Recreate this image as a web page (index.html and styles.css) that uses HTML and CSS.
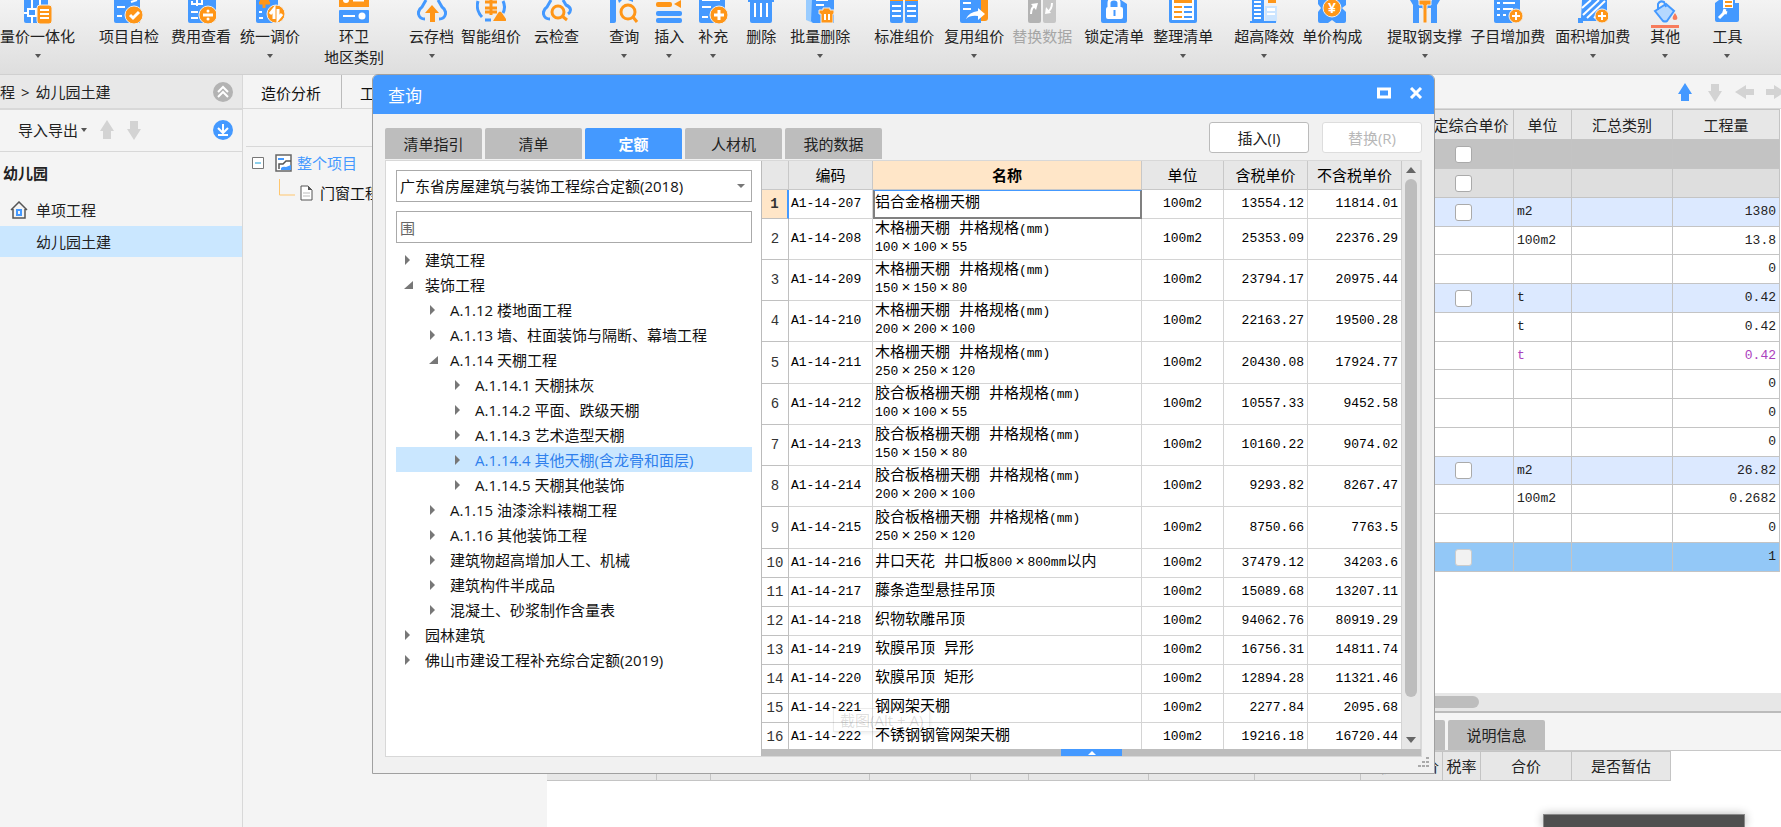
FILE: index.html
```html
<!DOCTYPE html>
<html lang="zh-CN">
<head>
<meta charset="utf-8">
<title>查询</title>
<link rel="stylesheet" href="styles.css">
</head>
<body>
<header class="ribbon">
  <button class="tool"><svg viewBox="0 0 30 24"><path class="b" d="M1 0h24v23H3a2 2 0 0 1-2-2z"/><path class="wl thin" d="M1 13h14M9 0v23M17 0v6"/><path class="w" d="M4 8h10v9H4z"/><path class="b" d="M6 10h6v5H6z"/><rect class="o ws" x="14" y="5" width="15" height="19" rx="3"/><path class="wl thin" d="M17 10h9M17 14h9M17 18h9"/></svg><span>量价一体化</span><i class="caret"></i></button>
  <button class="tool g24"><svg viewBox="0 0 30 24"><path class="b" d="M0 0h26v23H2a2 2 0 0 1-2-2z"/><path class="wl thin" d="M3 7h8M3 16h5M17 2l6-2"/><circle class="o ws" cx="20" cy="15" r="9"/><path class="wl" d="M16 15l3 3 6-6"/></svg><span>项目自检</span></button>
  <button class="tool g12"><svg viewBox="0 0 30 24"><path class="b" d="M2 0h28v17L22 23H4a2 2 0 0 1-2-2z"/><path class="wl thin" d="M5 12h7M5 18h7M6 1v3h10V0M11 0v6"/><circle class="o ws" cx="22" cy="15" r="9"/><path class="wl" d="M17 15h10"/><circle class="w" cx="22" cy="11" r="1.5"/><circle class="w" cx="22" cy="19" r="1.5"/></svg><span>费用查看</span></button>
  <button class="tool g9"><svg viewBox="0 0 30 24"><path class="b" d="M1 0h22v23H3a2 2 0 0 1-2-2z"/><path class="ol" d="M4 3h11M9 0v8M5 0h9"/><path class="wl thin" d="M4 12h3M4 18h4"/><circle class="o ws" cx="21" cy="14" r="9"/><path class="wl" d="M19 19V9l-4 5M23 9v10l4-5"/></svg><span>统一调价</span><i class="caret"></i></button>
  <button class="tool g24"><svg viewBox="0 0 30 24"><path class="o" d="M0 0h30v7H0z"/><circle class="w" cx="7" cy="0" r="3"/><path class="wl" d="M14 0h11"/><rect class="b" y="10" width="30" height="13" rx="1"/><path class="wl thin" d="M4 16h12"/><circle class="w" cx="23" cy="16" r="3.5"/></svg><span>环卫</span><span>地区类别</span></button>
  <button class="tool g25"><svg viewBox="0 0 30 24"><path class="bl" d="M8 19C1 19-1 11 5 7L9 0M22 19c7 0 9-8 3-12L21 0"/><path class="o" d="M15 5l7 8h-4v9h-5v-9H8z"/></svg><span>云存档</span><i class="caret"></i></button>
  <button class="tool g7"><svg viewBox="0 0 30 24"><path class="bl" d="M2 1C0 8 3 14 6 17M9 20h6M27 1q3 6 0 12"/><path class="ol" d="M9 2h12M9 8h12M15 0v15M9 12h12"/><path class="o" d="M17 21l5-8q2-3 4 0l4 6q1 2-1 2z"/></svg><span>智能组价</span></button>
  <button class="tool g13"><svg viewBox="0 0 30 24"><path class="bl" d="M8 19C1 19-1 11 5 7L9 0M26 14c4-3 3-7-2-9L21 0"/><circle class="ol" cx="16" cy="12" r="6"/><path class="ol" d="M20 16l5 4"/></svg><span>云检查</span></button>
  <button class="tool g30"><svg viewBox="0 0 30 24"><path class="b" d="M1 0h6v21q0 2-2 2H1zM9 0h4l-3 3zM19 0h5v2z"/><circle class="ol" cx="19" cy="12" r="7"/><path class="ol" d="M24 17l4 5"/></svg><span>查询</span><i class="caret"></i></button>
  <button class="tool g15"><svg viewBox="0 0 30 24"><rect class="o" x="2" y="2" width="16" height="5" rx="2"/><path class="o" d="M20 4l7-4v8z"/><rect class="b" x="2" y="11" width="26" height="5" rx="2"/><rect class="b" x="2" y="18" width="26" height="5" rx="2"/></svg><span>插入</span><i class="caret"></i></button>
  <button class="tool g14"><svg viewBox="0 0 30 24"><path class="b" d="M1 0h26v10l-8 13H3a2 2 0 0 1-2-2z"/><path class="wl thin" d="M4 0h18M4 7h9M4 17h6"/><circle class="o ws" cx="21" cy="15" r="9"/><path class="wl" d="M16 15h10M21 10v10"/></svg><span>补充</span><i class="caret"></i></button>
  <button class="tool g18"><svg viewBox="0 0 30 24"><path class="b" d="M2 0h26v2h-2v19q0 2-2 2H6q-2 0-2-2V2H2z"/><path class="wl thin" d="M9 3v14M15 3v14M21 3v14"/></svg><span>删除</span></button>
  <button class="tool g14"><svg viewBox="0 0 30 24"><path class="lb" d="M1 0h7v23L1 20z"/><path class="b" d="M7 0h22v23H8l-2-2z"/><path class="wl thin" d="M11 0h12M11 5h8"/><path class="o ws" d="M14 10h4V8h7v2h4v4h-1v9H16v-9h-2z"/><path class="wl thin" d="M20 14v6M24 14v6"/></svg><span>批量删除</span><i class="caret"></i></button>
  <button class="tool g24"><svg viewBox="0 0 30 24"><rect class="b" x="1" y="-2" width="13" height="25" rx="2"/><rect class="b" x="16" y="-2" width="13" height="25" rx="2"/><path class="o" d="M1 0h13v1H1zM16 0h13v1H16z"/><path class="wl thin" d="M3 6h9M3 11h9M3 16h9M18 6h9M18 11h9M18 16h9"/></svg><span>标准组价</span></button>
  <button class="tool g10"><svg viewBox="0 0 30 24"><path class="o" d="M20 0h9v18q0 3-3 3h-6z"/><path class="b" d="M1 0h21v23H3q-2 0-2-2z"/><path class="wl thin" d="M4 3h8M4 9h8"/><path class="w" d="M7 19q3-7 12-8V8l7 6-7 6v-4q-8-1-12 3z"/></svg><span>复用组价</span><i class="caret"></i></button>
  <button class="tool g8" disabled><svg viewBox="0 0 30 24"><rect class="gy" x="1" y="-2" width="13" height="25" rx="2"/><rect class="gy lt" x="16" y="-2" width="13" height="25" rx="2"/><path class="wl thin" d="M4 14q0-7 5-9"/><path class="w" d="M4 4l7-1-2 7z"/><path class="wl thin" d="M25 3q0 7-5 9"/><path class="w" d="M18 14l1-7 5 6z"/></svg><span>替换数据</span></button>
  <button class="tool g12"><svg viewBox="0 0 30 24"><path class="b" d="M2 0h20l6 4v17q0 2-2 2H4q-2 0-2-2z"/><path class="wl" d="M10 8V3q0-4 5-4t5 4v5"/><rect class="w" x="7" y="7" width="17" height="12" rx="2"/><path class="bl thin" d="M15.500 10v6"/></svg><span>锁定清单</span></button>
  <button class="tool g9"><svg viewBox="0 0 30 24"><rect class="b" x="1" y="-3" width="28" height="26" rx="2"/><path class="w" d="M4 0h22v20H4z"/><path class="o" d="M6 0h18v3H6z"/><path class="ol thin" d="M6 7h8M6 12h8M6 17h8"/><path class="bl thin" d="M16 7h8M16 12h8M16 17h8"/></svg><span>整理清单</span><i class="caret"></i></button>
  <button class="tool g21"><svg viewBox="0 0 30 24"><path class="lb lt" d="M16 6h12v16H16z"/><path class="b" d="M3 0h12v21h12v2H1v-2h2z"/><path class="wl thin" d="M5 2h7M5 6h7M5 10h7M5 14h7M5 18h7"/><path class="w" d="M18 8h8v3h-8zM18 13h8v2h-8z"/><path class="o" d="M19 0h8v3h-8z"/></svg><span>超高降效</span><i class="caret"></i></button>
  <button class="tool g8"><svg viewBox="0 0 30 24"><path class="b" d="M1 0h28v5l-4 3 4 4v9q0 2-2 2h-8l-4-3-4 3H3q-2 0-2-2v-9l3-4-3-4z"/><circle class="o ws" cx="15" cy="8" r="9"/><text class="yen" x="15" y="13">¥</text></svg><span>单价构成</span></button>
  <button class="tool g25"><svg viewBox="0 0 30 24"><path class="b" d="M0 0h8l2 3h10l2-3h8l-3 5v18h-6V8h-3l-3 4-3-4H9v15H3V5z"/><path class="ws o" d="M9 0h12v5h-4v18h-4V5H9z"/></svg><span>提取钢支撑</span><i class="caret"></i></button>
  <button class="tool g8"><svg viewBox="0 0 30 24"><path class="b" d="M1 0h26v10l-8 13H3q-2 0-2-2z"/><path class="wl thin" d="M4 3h3M4 9h3M4 15h3M10 3h12M10 9h10M10 15h3"/><circle class="o ws" cx="23" cy="16" r="7"/><path class="wl thin" d="M19 16h8M23 12v8"/></svg><span>子目增加费</span></button>
  <button class="tool g10"><svg viewBox="0 0 30 24"><path class="b" d="M4 0h25v12l-9 9H5v2H0v-5h3z"/><path class="wl thin" d="M4 8l9-8M5 15L21 0M9 18L27 1M16 18l5-5"/><circle class="o ws" cx="24" cy="16" r="7"/><path class="wl thin" d="M20 16h8M24 12v8"/></svg><span>面积增加费</span><i class="caret"></i></button>
  <button class="tool g20"><svg viewBox="0 0 30 28" class="tall"><path class="lb bl thin" d="M5 11L16 4l8 7-7 10q-2 1-4 0z"/><path class="bl thin" d="M8 10V4q2-4 6-2l2 5"/><path class="r" d="M25 13q5 7 0 7t0-7zM1 25h28v3H1z"/></svg><span>其他</span><i class="caret"></i></button>
  <button class="tool g32"><svg viewBox="0 0 30 24"><path class="b" d="M3 3l4-3h16v3h4v17q0 2-2 2H5q-2 0-2-2z"/><path class="w" d="M11 0h10v8H11z"/><path class="ol thin" d="M13 2h7M13 6h7"/><path class="wl" d="M7 18l6-6M13 9l-1 3 3 1"/></svg><span>工具</span><i class="caret"></i></button>
</header>

<main class="app">
  <aside class="side">
    <div class="crumb"><span>程</span><span>&gt;</span><span>幼儿园土建</span><button class="round" aria-label="收起"><svg viewBox="0 0 20 20"><circle cx="10" cy="10" r="10" fill="#b3b3b3"/><path class="wl thin" d="M5 10l5-5 5 5M5 15l5-5 5 5"/></svg></button></div>
    <div class="sidebar-tools"><button class="plain">导入导出<i class="caret"></i></button>
      <svg class="arrow" viewBox="0 0 14 20"><path d="M7 0l7 11h-3v8H3v-8H0z"/></svg>
      <svg class="arrow" viewBox="0 0 14 20"><path d="M7 20L0 9h3V1h8v8h3z"/></svg>
      <button class="round" aria-label="下载"><svg viewBox="0 0 20 20"><circle class="b" cx="10" cy="10" r="10"/><path class="wl thin" d="M10 4v8M5 8l5 5 5-5M5 15h10"/></svg></button></div>
    <h2>幼儿园</h2>
    <nav>
      <a href="#" class="nav-row"><svg viewBox="0 0 18 18"><path d="M1 9l8-8 8 8M3 8v9h12V8" fill="none" stroke="#555" stroke-width="1.500"/><path class="bl thin" d="M7 9h4v5H7z"/></svg>单项工程</a>
      <a href="#" class="nav-row current">幼儿园土建</a>
    </nav>
  </aside>
  <section class="work">
    <div class="worktabs"><div><button class="plain tab">造价分析</button><button class="plain tab">工程概况</button></div>
      <div class="moves">
        <svg viewBox="0 0 20 20"><path class="b" d="M10 1l7 11h-3v7H6v-7H3z"/></svg>
        <svg viewBox="0 0 20 20"><path d="M10 20L3 9h3V2h8v7h3z"/></svg>
        <svg viewBox="0 0 20 20"><path d="M0 10l11-7v4h8v6h-8v4z"/></svg>
        <svg viewBox="0 0 20 20"><path d="M20 10L9 3v4H1v6h8v4z"/></svg>
      </div></div>
    <div class="split">
      <div class="project">
        <div class="filter"></div>
        <div class="node"><svg class="fold" viewBox="0 0 12 12"><path d="M.5.5h11v11H.5z" fill="#fff" stroke="#777"/><path d="M3 6h6" stroke="#19a0d8"/></svg><svg class="pic" viewBox="0 0 17 18"><path d="M1 1h15v16H1z" fill="#fff" stroke="#666" stroke-width="1.500"/><path d="M3 5h6" stroke="#4499ff" stroke-width="2"/><path d="M4 15v-5h4l3-3h5" fill="none" stroke="#555" stroke-width="1.500"/><path class="b" d="M6 16v-2q2-2 5-1l5-2v5z"/></svg><span>整个项目</span></div>
        <div class="node child"><svg class="branch" viewBox="0 0 16 20"><path d="M.5 0v16H16" fill="none" stroke="#ffc66e"/></svg><svg class="file" viewBox="0 0 13 16"><path d="M1 1h7l4 4v10H1z" fill="#fff" stroke="#555"/><path d="M8 1v4h4z" fill="#555"/><path d="M3 8h7M3 11h7" stroke="#bbb"/></svg><span>门窗工程</span></div>
      </div>
      <div class="pane">
        <div class="gridwrap">
          <table class="quant">
            <colgroup><col><col class="c100"><col class="c58"><col class="c101"><col class="c107"></colgroup>
            <thead><tr><th></th><th>锁定综合单价</th><th>单位</th><th>汇总类别</th><th>工程量</th></tr></thead>
            <tbody>
              <tr class="dark"><td></td><td><input type="checkbox" aria-label="锁定"></td><td></td><td></td><td></td></tr>
              <tr class="grey"><td></td><td><input type="checkbox" aria-label="锁定"></td><td></td><td></td><td></td></tr>
              <tr class="blue"><td></td><td><input type="checkbox" aria-label="锁定"></td><td>m2</td><td></td><td>1380</td></tr>
              <tr><td></td><td></td><td>100m2</td><td></td><td>13.8</td></tr>
              <tr><td></td><td></td><td></td><td></td><td>0</td></tr>
              <tr class="blue"><td></td><td><input type="checkbox" aria-label="锁定"></td><td>t</td><td></td><td>0.42</td></tr>
              <tr><td></td><td></td><td>t</td><td></td><td>0.42</td></tr>
              <tr class="purple"><td></td><td></td><td>t</td><td></td><td>0.42</td></tr>
              <tr><td></td><td></td><td></td><td></td><td>0</td></tr>
              <tr><td></td><td></td><td></td><td></td><td>0</td></tr>
              <tr><td></td><td></td><td></td><td></td><td>0</td></tr>
              <tr class="blue"><td></td><td><input type="checkbox" aria-label="锁定"></td><td>m2</td><td></td><td>26.82</td></tr>
              <tr><td></td><td></td><td>100m2</td><td></td><td>0.2682</td></tr>
              <tr><td></td><td></td><td></td><td></td><td>0</td></tr>
              <tr class="picked"><td></td><td><input type="checkbox" disabled aria-label="锁定"></td><td></td><td></td><td>1</td></tr>
            </tbody>
          </table>
        </div>
        <div class="hscroll"><div></div></div>
        <div class="lowtabs"><button aria-label="费用构成"></button><button>说明信息</button></div>
        <div class="lower">
          <table class="detail">
            <colgroup><col class="c110"><col class="c54"><col class="c159"><col class="c101"><col class="c58"><col class="c120"><col class="c106"><col class="c106"><col class="c82"><col class="c38"><col class="c91"><col class="c99"></colgroup>
            <thead><tr><th></th><th></th><th></th><th></th><th></th><th></th><th></th><th></th><th>含税市场价</th><th>税率</th><th>合价</th><th>是否暂估</th></tr></thead>
          </table>
        </div>
      </div>
    </div>
  </section>
</main>

<div class="toast"></div>

<section class="dialog" role="dialog" aria-label="查询">
  <div class="titlebar"><span>查询</span><div class="winbtns">
    <button aria-label="最大化"><svg viewBox="0 0 14 12"><path class="wl" d="M1.500 2h11v8h-11z"/></svg></button>
    <button aria-label="关闭"><svg viewBox="0 0 14 12"><path class="wl" d="M2 1l10 10M12 1L2 11"/></svg></button></div></div>
  <div class="dlgbody">
    <div class="dlgtop">
      <div class="tabs"><button>清单指引</button><button>清单</button><button class="on">定额</button><button>人材机</button><button>我的数据</button></div>
      <div class="actions"><button>插入(I)</button><button disabled>替换(R)</button></div>
    </div>
    <div class="content">
      <div class="left">
        <div class="combo"><select aria-label="定额库"><option>广东省房屋建筑与装饰工程综合定额(2018)</option></select></div>
        <input class="search" type="text" value="围" aria-label="搜索">
        <ul class="tree">
          <li>建筑工程</li>
          <li class="open">装饰工程</li>
          <li class="l1">A.1.12 楼地面工程</li>
          <li class="l1">A.1.13 墙、柱面装饰与隔断、幕墙工程</li>
          <li class="l1 open">A.1.14 天棚工程</li>
          <li class="l2">A.1.14.1 天棚抹灰</li>
          <li class="l2">A.1.14.2 平面、跌级天棚</li>
          <li class="l2">A.1.14.3 艺术造型天棚</li>
          <li class="l2 sel">A.1.14.4 其他天棚(含龙骨和面层)</li>
          <li class="l2">A.1.14.5 天棚其他装饰</li>
          <li class="l1">A.1.15 油漆涂料裱糊工程</li>
          <li class="l1">A.1.16 其他装饰工程</li>
          <li class="l1">建筑物超高增加人工、机械</li>
          <li class="l1">建筑构件半成品</li>
          <li class="l1">混凝土、砂浆制作含量表</li>
          <li>园林建筑</li>
          <li>佛山市建设工程补充综合定额(2019)</li>
        </ul>
      </div>
      <div class="right">
        <div class="listrow">
          <div class="listclip">
            <table class="list">
              <colgroup><col class="c27"><col class="c84"><col><col class="c82"><col class="c84"><col class="c94"></colgroup>
              <thead><tr><th></th><th>编码</th><th class="hot">名称</th><th>单位</th><th>含税单价</th><th>不含税单价</th></tr></thead>
              <tbody>
                <tr class="active"><th>1</th><td>A1-14-207</td><td>铝合金格栅天棚</td><td>100m2</td><td>13554.12</td><td>11814.01</td></tr>
                <tr class="two"><th>2</th><td>A1-14-208</td><td>木格栅天棚 井格规格<span class="n">(mm)</span><br><span class="n">100<b>×</b>100<b>×</b>55</span></td><td>100m2</td><td>25353.09</td><td>22376.29</td></tr>
                <tr class="two"><th>3</th><td>A1-14-209</td><td>木格栅天棚 井格规格<span class="n">(mm)</span><br><span class="n">150<b>×</b>150<b>×</b>80</span></td><td>100m2</td><td>23794.17</td><td>20975.44</td></tr>
                <tr class="two"><th>4</th><td>A1-14-210</td><td>木格栅天棚 井格规格<span class="n">(mm)</span><br><span class="n">200<b>×</b>200<b>×</b>100</span></td><td>100m2</td><td>22163.27</td><td>19500.28</td></tr>
                <tr class="two"><th>5</th><td>A1-14-211</td><td>木格栅天棚 井格规格<span class="n">(mm)</span><br><span class="n">250<b>×</b>250<b>×</b>120</span></td><td>100m2</td><td>20430.08</td><td>17924.77</td></tr>
                <tr class="two"><th>6</th><td>A1-14-212</td><td>胶合板格栅天棚 井格规格<span class="n">(mm)</span><br><span class="n">100<b>×</b>100<b>×</b>55</span></td><td>100m2</td><td>10557.33</td><td>9452.58</td></tr>
                <tr class="two"><th>7</th><td>A1-14-213</td><td>胶合板格栅天棚 井格规格<span class="n">(mm)</span><br><span class="n">150<b>×</b>150<b>×</b>80</span></td><td>100m2</td><td>10160.22</td><td>9074.02</td></tr>
                <tr class="two"><th>8</th><td>A1-14-214</td><td>胶合板格栅天棚 井格规格<span class="n">(mm)</span><br><span class="n">200<b>×</b>200<b>×</b>100</span></td><td>100m2</td><td>9293.82</td><td>8267.47</td></tr>
                <tr class="two"><th>9</th><td>A1-14-215</td><td>胶合板格栅天棚 井格规格<span class="n">(mm)</span><br><span class="n">250<b>×</b>250<b>×</b>120</span></td><td>100m2</td><td>8750.66</td><td>7763.5</td></tr>
                <tr><th>10</th><td>A1-14-216</td><td>井口天花 井口板<span class="n">800<b>×</b>800mm</span>以内</td><td>100m2</td><td>37479.12</td><td>34203.6</td></tr>
                <tr><th>11</th><td>A1-14-217</td><td>藤条造型悬挂吊顶</td><td>100m2</td><td>15089.68</td><td>13207.11</td></tr>
                <tr><th>12</th><td>A1-14-218</td><td>织物软雕吊顶</td><td>100m2</td><td>94062.76</td><td>80919.29</td></tr>
                <tr><th>13</th><td>A1-14-219</td><td>软膜吊顶 异形</td><td>100m2</td><td>16756.31</td><td>14811.74</td></tr>
                <tr><th>14</th><td>A1-14-220</td><td>软膜吊顶 矩形</td><td>100m2</td><td>12894.28</td><td>11321.46</td></tr>
                <tr><th>15</th><td>A1-14-221</td><td>钢网架天棚</td><td>100m2</td><td>2277.84</td><td>2095.68</td></tr>
                <tr><th>16</th><td>A1-14-222</td><td>不锈钢钢管网架天棚</td><td>100m2</td><td>19216.18</td><td>16720.44</td></tr>
              </tbody>
            </table>
            <div class="hint">截图(Alt + A)</div>
          </div>
          <div class="vscroll"><i class="up"></i><div></div><i class="down"></i></div>
        </div>
        <button class="splitter" aria-label="展开"><span><i></i></span></button>
      </div>
    </div>
  </div>
  <svg class="grip" viewBox="0 0 12 12"><path d="M8 0h3v2H8zM4 4h3v2H4zM8 4h3v2H8zM0 8h3v2H0zM4 8h3v2H4zM8 8h3v2H8z" fill="#aaa"/></svg>
</section>
</body>
</html>
```

FILE: styles.css
```css
* { box-sizing: border-box; }
body {
  margin: 0; height: 100vh; overflow: hidden; display: flex; flex-direction: column;
  background: #f4f4f4; color: #222;
  font: 15px/20px "Open Sans", "Noto Sans CJK SC", sans-serif;
}
button, input, select { font: inherit; color: inherit; }
button { border: 0; padding: 0; background: none; }
svg { display: block; flex: none; }
i { font-style: normal; }

/* icon colours */
.b { fill: #4499ff; }
.lb { fill: #99ccff; }
.lb.lt { fill: #cce5ff; }
.o { fill: #ff9618; }
.w { fill: #fff; }
.r { fill: #f77c5c; }
.gy { fill: #b3b3b3; }
.gy.lt { fill: #c6c6c6; }
.ws { stroke: #eee; stroke-width: 1; }
.wl, .bl, .ol { fill: none; stroke: #fff; stroke-width: 3; }
.bl { stroke: #4499ff; }
.ol { stroke: #ff9618; }
.lb.bl { fill: #b5d8ff; }
.thin { stroke-width: 2; }
.yen { fill: #fff; font: bold 14px "Liberation Sans", sans-serif; text-anchor: middle; }

.caret { width: 0; height: 0; border: 3px solid transparent; border-top: 4px solid #555; border-bottom: 0; }

/* ribbon */
.ribbon {
  height: 75px; flex: none; display: flex; align-items: flex-start; overflow: hidden;
  background: linear-gradient(#f3f3f3, #dedede); border-bottom: 1px solid #d0d0d0;
}
.tool { flex: none; display: flex; flex-direction: column; align-items: center; white-space: nowrap; }
.tool svg { width: 30px; height: 24px; margin-bottom: 2px; }
.tool .tall { height: 28px; margin-bottom: -2px; }
.tool .caret { margin-top: 8px; }
.tool:disabled { color: #a6a6a6; }
.tool span + span { margin-top: 1px; }
.g7 { margin-left: 7px; }
.g8 { margin-left: 8px; }
.g9 { margin-left: 9px; }
.g10 { margin-left: 10px; }
.g12 { margin-left: 12px; }
.g13 { margin-left: 13px; }
.g14 { margin-left: 14px; }
.g15 { margin-left: 15px; }
.g18 { margin-left: 18px; }
.g20 { margin-left: 20px; }
.g21 { margin-left: 21px; }
.g24 { margin-left: 24px; }
.g25 { margin-left: 25px; }
.g30 { margin-left: 30px; }
.g32 { margin-left: 32px; }

.app { flex: 1; min-height: 0; display: flex; }

/* left navigation */
.side { width: 243px; flex: none; border-right: 1px solid #d8d8d8; }
.crumb {
  height: 35px; display: flex; align-items: center; gap: 6px;
  padding-right: 9px; background: #e8e8e8; border-bottom: 2px solid #d8d8d8;
}
.crumb .round { margin-left: auto; }
.round svg { width: 20px; height: 20px; }
.sidebar-tools { height: 42px; display: flex; align-items: center; padding: 0 9px 2px 18px; border-bottom: 1px solid #d8d8d8; }
.sidebar-tools .plain { display: flex; align-items: center; gap: 3px; margin-right: 13px; }
.sidebar-tools .round { margin-left: auto; }
.arrow { width: 14px; height: 20px; margin-right: 13px; fill: #d3d3d3; }
.side h2 { margin: 11px 0; padding-left: 3px; font-size: 15px; line-height: 20px; }
.nav-row { display: flex; align-items: center; height: 32px; padding-left: 36px; color: inherit; text-decoration: none; }
.nav-row svg { width: 18px; height: 18px; margin: 0 8px 0 -26px; }
.nav-row.current { height: 31px; background: #cae7ff; }

/* workspace */
.work { flex: 1; min-width: 0; display: flex; flex-direction: column; }
.worktabs { height: 34px; flex: none; display: flex; justify-content: space-between; align-items: center; border-bottom: 1px solid #d8d8d8; }
.worktabs > div { display: flex; height: 100%; align-items: center; }
.tab { height: 100%; padding: 3px 20px 0 18px; border-right: 1px solid #bbb; color: #111; }
.worktabs .moves { gap: 10px; margin-right: -4px; fill: #d3d3d3; }
.moves svg { width: 20px; height: 20px; }
.split { flex: 1; min-height: 0; display: flex; }
.project { width: 304px; flex: none; padding-left: 3px; }
.filter { height: 38px; border-bottom: 1px solid #d8d8d8; margin-bottom: 1px; }
.node { display: flex; align-items: center; height: 30px; padding-left: 6px; color: #4499ff; white-space: nowrap; }
.fold { width: 12px; height: 12px; margin-right: 11px; }
.pic { width: 17px; height: 18px; margin-right: 5px; }
.node.child { padding-left: 33px; color: #111; }
.branch { width: 16px; height: 20px; margin: -8px 5px 0 0; }
.file { width: 13px; height: 16px; margin-right: 7px; }

.pane { flex: 1; min-width: 0; display: flex; flex-direction: column; }
.gridwrap { flex: 1; min-height: 0; overflow: hidden; background: #fff; padding-right: 1px; }
table { border-collapse: separate; border-spacing: 0; table-layout: fixed; }
th { font-weight: normal; padding: 0; white-space: nowrap; }
td { padding: 0 3px; white-space: nowrap; }
.quant { width: 100%; color: #222; }
.quant th { height: 31px; background: #e7e7e7; border: solid #c4c4c4; border-width: 1px 1px 1px 0; }
.quant td { height: 29px; border: solid #c4c4c4; border-width: 0 1px 1px 0; font: 13px/18px "Liberation Mono", monospace; }
.quant tbody tr:nth-child(4n) td { height: 28px; }
.quant td:nth-child(2) { text-align: center; }
.quant td:last-child { text-align: right; }
.dark { background: #c3c3c3; }
.grey { background: #dedede; }
.blue { background: #dce9ff; }
.quant .purple { color: #ab41bd; }
.picked { background: #93c8f7; }
.quant input { appearance: none; display: block; width: 17px; height: 17px; margin: 0 auto; background: #fff; border: 1px solid #aaa; border-radius: 3px; }
.quant input:disabled { background: #f2f2f2; border-color: #ccc; }
.c27 { width: 27px; }
.c38 { width: 38px; }
.c54 { width: 54px; }
.c58 { width: 58px; }
.c82 { width: 82px; }
.c84 { width: 84px; }
.c91 { width: 91px; }
.c94 { width: 94px; }
.c99 { width: 99px; }
.c100 { width: 100px; }
.c101 { width: 101px; }
.c106 { width: 106px; }
.c107 { width: 107px; }
.c110 { width: 110px; }
.c120 { width: 120px; }
.c159 { width: 159px; }
.hscroll { height: 20px; flex: none; padding: 3px 0; background: #e7e7e7; border-bottom: 2px solid #bbb; }
.hscroll div { width: 932px; height: 12px; border-radius: 6px; background: #bdbdbd; }
.lowtabs { height: 38px; flex: none; display: flex; gap: 3px; padding: 7px 0 0 801px; border-bottom: 1px solid #c8c8c8; }
.lowtabs button { flex: none; width: 97px; background: #bdbdbd; border-radius: 2px 2px 0 0; }
.lower { height: 76px; flex: none; overflow: hidden; background: #fff; }
.detail { width: 1124px; }
.detail th { height: 30px; background: #e7e7e7; border: solid #c4c4c4; border-width: 1px 1px 1px 0; }

.toast { position: absolute; left: 1543px; bottom: 0; width: 202px; height: 13px; background: #4f4f4f; border: 1px solid #888; border-bottom: 0; box-shadow: 0 0 10px rgba(0, 0, 0, .3); }

/* query window */
.dialog {
  position: absolute; left: 372px; right: 346px; top: 74px; bottom: 53px;
  display: flex; flex-direction: column; overflow: hidden;
  background: #f1f1f1; border: 1px solid #a0a0a0; border-radius: 6px 6px 0 0;
}
.titlebar { height: 39px; flex: none; display: flex; justify-content: space-between; align-items: center; padding: 3px 11px 0 15px; background: #4499ff; color: #fff; font-size: 17px; }
.winbtns { display: flex; gap: 18px; padding-bottom: 6px; }
.winbtns svg { width: 14px; height: 12px; }
.dlgbody { flex: 1; min-height: 0; display: flex; flex-direction: column; padding: 8px 12px 16px; }
.dlgtop { display: flex; justify-content: space-between; height: 38px; flex: none; }
.tabs { display: flex; gap: 3px; padding-top: 6px; }
.tabs button { width: 97px; height: 31px; background: #bdbdbd; border-radius: 2px 2px 0 0; }
.tabs .on { background: #4499ff; color: #fff; font-weight: bold; }
.actions { display: flex; gap: 13px; }
.actions button { width: 100px; height: 31px; background: #fff; border: 1px solid #bbb; border-radius: 3px; }
.actions button:disabled { color: #b8b8b8; border-color: #ddd; }
.content { flex: 1; min-height: 0; display: flex; border: 1px solid #d8d8d8; background: #fff; color: #111; }
.left { width: 375px; flex: none; padding: 9px 9px 0 10px; }
.combo { position: relative; margin-bottom: 9px; }
.combo::after { content: ""; position: absolute; right: 7px; top: 14px; border: 4px solid transparent; border-top: 4px solid #777; border-bottom: 0; }
.combo select, .search { appearance: none; display: block; width: 100%; height: 32px; padding: 0 3px; background: #fff; border: 1px solid #aaa; border-radius: 0; }
.search { color: #666; }
.tree { list-style: none; margin: 4px 0 0; padding: 0; }
.tree li { display: flex; align-items: center; height: 25px; padding-left: 8px; white-space: nowrap; }
.tree li::before { content: ""; flex: none; margin: 0 15px 0 1px; border: 5px solid transparent; border-left: 5px solid #777; border-right: 0; }
.tree .open::before { margin: 0 12px 0 0; border: 0; border-left: 9px solid transparent; border-bottom: 8px solid #777; }
.tree .l1 { padding-left: 33px; }
.tree .l2 { padding-left: 58px; }
.tree .sel { background: #cae7ff; color: #2f80ed; }

.right { flex: 1; min-width: 0; display: flex; flex-direction: column; border-left: 1px solid #bbb; }
.listrow { flex: 1; min-height: 0; display: flex; }
.listclip { flex: 1; min-width: 0; overflow: hidden; position: relative; }
.list { width: 100%; color: #000; }
.list thead th { height: 29px; background: #e7e7e7; border: solid #c8c8c8; border-width: 0 1px 1px 0; }
.list thead .hot { background: #ffe6c8; font-weight: bold; }
.list td, .list tbody th { height: 29px; border: solid #d4d4d4; border-width: 0 1px 1px 0; font: 13px/18px "Liberation Mono", monospace; }
.list tbody th { font-size: 14px; color: #333; border-color: #c0c0c0; }
.list td:nth-child(2) { padding: 0 2px; }
.list td:nth-child(3) { font: 15px/18px "Liberation Mono", "Noto Sans CJK SC", monospace; padding-left: 2px; }
.list td:nth-child(4) { text-align: center; }
.list td:nth-child(n+5) { text-align: right; }
.list .two td, .list .two th { height: 41px; }
.list .two:nth-child(4n+1) td { height: 42px; }
.n { font-size: 13px; }
.n b { display: inline-block; width: 15px; text-align: center; font-weight: normal; font-size: 15px; }
.list .active th { background: #ffe6c8; font-weight: bold; border-right: 2px solid #4499ff; }
.list .active td:nth-child(3) { border: 2px solid #808080; border-top: 1px solid #4499ff; padding-left: 0; }
.hint { position: absolute; left: 71px; bottom: 17px; padding: 1px 6px; border: 1px solid rgba(0, 0, 0, .08); color: rgba(0, 0, 0, .15); box-shadow: 1px 2px 3px rgba(0, 0, 0, .06); }
.vscroll { width: 19px; flex: none; display: flex; flex-direction: column; align-items: center; padding: 6px 0; background: #e7e7e7; border-right: 1px solid #d8d8d8; }
.vscroll div { width: 12px; flex: 1; margin: 6px 0 40px; border-radius: 6px; background: #bdbdbd; }
.up, .down { border: 5px solid transparent; border-bottom: 6px solid #666; border-top: 0; }
.down { border-top: 6px solid #666; border-bottom: 0; }
.splitter { height: 7px; flex: none; background: #bdbdbd; display: flex; justify-content: center; }
.splitter span { width: 61px; height: 7px; display: flex; justify-content: center; align-items: center; background: #4499ff; }
.splitter span i { border: 4px solid transparent; border-bottom: 4px solid #fff; border-top: 0; }
.grip { position: absolute; right: 4px; bottom: 4px; width: 12px; height: 12px; }
```
